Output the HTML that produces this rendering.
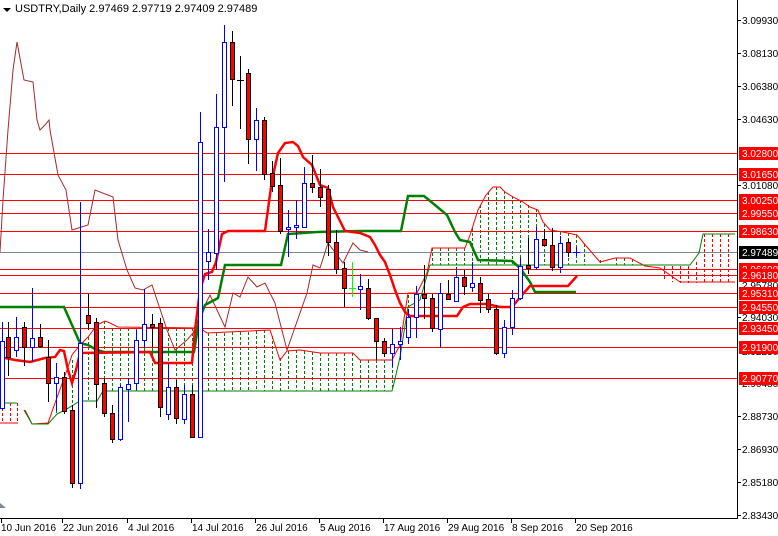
<!DOCTYPE html>
<html><head><meta charset="utf-8"><style>
html,body{margin:0;padding:0;background:#fff;}
svg{display:block;font-family:"Liberation Sans","DejaVu Sans",sans-serif;}
</style></head><body>
<svg width="778" height="536" viewBox="0 0 778 536" xmlns="http://www.w3.org/2000/svg">
<rect width="778" height="536" fill="#fff"/>
<!-- cloud verticals -->
<g stroke="#008000" stroke-width="1" stroke-dasharray="3,2" shape-rendering="crispEdges">
<line x1="56.5" y1="400" x2="56.5" y2="414"/><line x1="64.5" y1="385" x2="64.5" y2="410"/>
<line x1="72.5" y1="360" x2="72.5" y2="405"/><line x1="80.5" y1="345" x2="80.5" y2="401"/>
<line x1="88.5" y1="337" x2="88.5" y2="401"/><line x1="96.5" y1="326" x2="96.5" y2="398"/>
<line x1="104.5" y1="321" x2="104.5" y2="391"/>
<line x1="112.5" y1="328" x2="112.5" y2="391"/><line x1="120.5" y1="328" x2="120.5" y2="391"/>
<line x1="128.5" y1="328" x2="128.5" y2="391"/><line x1="136.5" y1="328" x2="136.5" y2="391"/>
<line x1="144.5" y1="328" x2="144.5" y2="391"/><line x1="152.5" y1="328" x2="152.5" y2="391"/>
<line x1="160.5" y1="328" x2="160.5" y2="391"/><line x1="168.5" y1="328" x2="168.5" y2="391"/>
<line x1="176.5" y1="328" x2="176.5" y2="391"/><line x1="184.5" y1="328" x2="184.5" y2="391"/>
<line x1="192.5" y1="328" x2="192.5" y2="391"/><line x1="200.5" y1="330" x2="200.5" y2="391"/>
<line x1="208.5" y1="333" x2="208.5" y2="391"/><line x1="216.5" y1="333" x2="216.5" y2="391"/>
<line x1="224.5" y1="333" x2="224.5" y2="391"/><line x1="232.5" y1="332" x2="232.5" y2="391"/>
<line x1="240.5" y1="332" x2="240.5" y2="391"/><line x1="248.5" y1="332" x2="248.5" y2="391"/>
<line x1="256.5" y1="331" x2="256.5" y2="391"/><line x1="264.5" y1="330" x2="264.5" y2="391"/>
<line x1="272.5" y1="336" x2="272.5" y2="391"/><line x1="280.5" y1="358" x2="280.5" y2="391"/>
<line x1="288.5" y1="351" x2="288.5" y2="391"/><line x1="296.5" y1="350" x2="296.5" y2="391"/>
<line x1="304.5" y1="351" x2="304.5" y2="391"/><line x1="312.5" y1="352" x2="312.5" y2="391"/>
<line x1="320.5" y1="353" x2="320.5" y2="391"/><line x1="328.5" y1="353" x2="328.5" y2="391"/>
<line x1="336.5" y1="353" x2="336.5" y2="391"/><line x1="344.5" y1="353" x2="344.5" y2="391"/>
<line x1="352.5" y1="353" x2="352.5" y2="391"/><line x1="360.5" y1="360" x2="360.5" y2="391"/>
<line x1="368.5" y1="360" x2="368.5" y2="391"/><line x1="376.5" y1="360" x2="376.5" y2="391"/>
<line x1="384.5" y1="360" x2="384.5" y2="391"/><line x1="392.5" y1="360" x2="392.5" y2="388"/>
<line x1="408.5" y1="295" x2="408.5" y2="307"/><line x1="416.5" y1="293" x2="416.5" y2="302"/>
<line x1="432.5" y1="248" x2="432.5" y2="265"/><line x1="440.5" y1="248" x2="440.5" y2="265"/>
<line x1="448.5" y1="248" x2="448.5" y2="265"/><line x1="456.5" y1="248" x2="456.5" y2="265"/>
<line x1="464.5" y1="248" x2="464.5" y2="265"/><line x1="472.5" y1="228" x2="472.5" y2="265"/>
<line x1="480.5" y1="205" x2="480.5" y2="265"/><line x1="488.5" y1="192" x2="488.5" y2="265"/>
<line x1="496.5" y1="187" x2="496.5" y2="265"/><line x1="504.5" y1="191" x2="504.5" y2="265"/>
<line x1="512.5" y1="196" x2="512.5" y2="265"/><line x1="520.5" y1="200" x2="520.5" y2="265"/>
<line x1="528.5" y1="205" x2="528.5" y2="265"/><line x1="536.5" y1="209" x2="536.5" y2="265"/>
<line x1="544.5" y1="224" x2="544.5" y2="265"/><line x1="552.5" y1="230" x2="552.5" y2="265"/>
<line x1="560.5" y1="232" x2="560.5" y2="265"/><line x1="568.5" y1="233" x2="568.5" y2="265"/>
<line x1="576.5" y1="235" x2="576.5" y2="265"/><line x1="584.5" y1="244" x2="584.5" y2="265"/>
<line x1="600.5" y1="260" x2="600.5" y2="265"/><line x1="616.5" y1="258" x2="616.5" y2="265"/>
<line x1="624.5" y1="258" x2="624.5" y2="265"/><line x1="632.5" y1="259" x2="632.5" y2="265"/>
</g>
<g stroke="#ff0000" stroke-width="1" stroke-dasharray="3,2" shape-rendering="crispEdges">
<line x1="2.5" y1="403" x2="2.5" y2="423"/><line x1="10.5" y1="403" x2="10.5" y2="423"/><line x1="17.5" y1="403" x2="17.5" y2="423"/>
<line x1="664.5" y1="266" x2="664.5" y2="280"/><line x1="672.5" y1="266" x2="672.5" y2="282"/>
<line x1="680.5" y1="266" x2="680.5" y2="283"/><line x1="688.5" y1="266" x2="688.5" y2="283"/>
<line x1="696.5" y1="262" x2="696.5" y2="283"/><line x1="704.5" y1="234" x2="704.5" y2="283"/>
<line x1="712.5" y1="234" x2="712.5" y2="283"/><line x1="720.5" y1="234" x2="720.5" y2="283"/>
<line x1="728.5" y1="234" x2="728.5" y2="283"/>
</g>
<!-- horizontal levels -->
<g stroke="#ff0000" stroke-width="1" shape-rendering="crispEdges">
<line x1="0" y1="153.5" x2="737" y2="153.5"/><line x1="0" y1="174.5" x2="737" y2="174.5"/>
<line x1="0" y1="200.5" x2="737" y2="200.5"/><line x1="0" y1="213.5" x2="737" y2="213.5"/>
<line x1="0" y1="231.5" x2="737" y2="231.5"/><line x1="0" y1="269.5" x2="737" y2="269.5"/>
<line x1="0" y1="275.5" x2="737" y2="275.5"/><line x1="0" y1="293.5" x2="737" y2="293.5"/>
<line x1="0" y1="307.5" x2="737" y2="307.5"/><line x1="0" y1="328.5" x2="737" y2="328.5"/>
<line x1="0" y1="347.5" x2="737" y2="347.5"/><line x1="0" y1="378.5" x2="737" y2="378.5"/>
</g>
<line x1="0" y1="252.5" x2="737" y2="252.5" stroke="#778899" stroke-width="1" shape-rendering="crispEdges"/>
<!-- span lines -->
<polyline fill="none" stroke="#ff0000" stroke-width="1" points="24,410 32,424 48,423 55,403 67,370 72,355 80,345 88,337 97,325 105,321 110,323 118,327 200,328 207,333 270,330 275,345 280,360 287,351 300,350 320,353 353,353 360,360 392,360 400,345 408,293 417,293 427,273 432,248 465,248 470,235 478,210 486,195 493,187 500,187 505,192 513,197 523,202 530,207 538,210 543,222 550,230 563,232 577,235 587,247 600,262 615,258 630,258 645,266 660,268 680,282 735,282"/>
<polyline fill="none" stroke="#ff0000" stroke-width="1" points="0,423 18,423"/>
<polyline fill="none" stroke="#008000" stroke-width="1" points="0,403 17,403"/>
<polyline fill="none" stroke="#008000" stroke-width="1" points="25,410 32,424 48,424 57,414 65,410 80,401 97,401 103,391 392,391 395,379 400,357 408,307 420,300 430,265 690,265 699,253 703,234 735,234"/>
<!-- chikou -->
<polyline fill="none" stroke="#a52a2a" stroke-width="1" points="0,252 3,200 8,130 13,70 17,42 24,80 33,82 37,120 40,130 45,125 49,120 50,130 58,175 66,190 72,230 88,225 95,190 113,197 118,240 127,270 135,288 143,290 152,285 157,300 167,330 175,350 187,340 193,333 200,315 210,295 217,310 225,327 233,293 240,297 248,277 257,287 265,283 275,303 287,350 307,293 313,265 320,268 328,243 343,263 353,243 360,250 368,252"/>
<!-- kijun -->
<polyline fill="none" stroke="#008000" stroke-width="2.5" points="0,307 64,307 72,325 80,343 88,345 97,350 104,352 194,352 199,320 205,305 218,298 225,265 281,265 288,234 317,232 360,231 401,231 408,196 424,196 435,205 447,215 455,232 460,240 470,242 478,260 512,261 520,268 530,282 535,292 576,292"/>
<!-- tenkan -->
<polyline fill="none" stroke="#ff0000" stroke-width="2.5" points="0,357 15,360 30,362 45,358 55,357 60,350 64,351 68,370 72,383 76,370 80,353 150,352 155,363 192,363 195,330 200,290 205,274 212,272 216,262 222,234 228,231 265,231 272,180 278,153 285,143 293,142 298,146 303,157 312,165 320,185 328,188 333,207 342,225 345,231 360,233 370,237 375,245 380,255 385,262 390,275 395,290 400,303 405,312 410,316 457,316 463,307 470,304 487,304 500,307 512,307 517,301 522,295 530,286 568,286 577,276"/>
<!-- candles -->
<g shape-rendering="crispEdges" stroke-width="1">
<g stroke="#0000ff" fill="#fff">
<line x1="2.5" y1="322" x2="2.5" y2="410"/><rect x="0.5" y="341.5" width="4" height="67"/>
<line x1="16.5" y1="317" x2="16.5" y2="357"/><rect x="14.5" y="337.5" width="4" height="13"/>
<line x1="32.5" y1="288" x2="32.5" y2="362"/><rect x="30.5" y="338.5" width="4" height="9"/>
<line x1="56.5" y1="363" x2="56.5" y2="411"/><rect x="54.5" y="377.5" width="4" height="6"/>
<line x1="80.5" y1="202" x2="80.5" y2="489"/><rect x="78.5" y="343.5" width="4" height="140"/>
<line x1="120.5" y1="385" x2="120.5" y2="441"/><rect x="118.5" y="387.5" width="4" height="52"/>
<line x1="128.5" y1="378" x2="128.5" y2="422"/><rect x="126.5" y="384.5" width="4" height="5"/>
<line x1="136.5" y1="330" x2="136.5" y2="390"/><rect x="134.5" y="340.5" width="4" height="43"/>
<line x1="144.5" y1="289" x2="144.5" y2="348"/><rect x="142.5" y="324.5" width="4" height="16"/>
<line x1="168.5" y1="363" x2="168.5" y2="420"/><rect x="166.5" y="387.5" width="4" height="27"/>
<line x1="184.5" y1="385" x2="184.5" y2="424"/><rect x="182.5" y="394.5" width="4" height="25"/>
<line x1="200.5" y1="112" x2="200.5" y2="437"/><rect x="198.5" y="142.5" width="4" height="295"/>
<line x1="208.5" y1="229" x2="208.5" y2="280"/><rect x="206.5" y="252.5" width="4" height="9"/>
<line x1="216.5" y1="94" x2="216.5" y2="270"/><rect x="214.5" y="127.5" width="4" height="126"/>
<line x1="224.5" y1="25" x2="224.5" y2="182"/><rect x="222.5" y="42.5" width="4" height="85"/>
<line x1="256.5" y1="108" x2="256.5" y2="171"/><rect x="254.5" y="120.5" width="4" height="19"/>
<line x1="288.5" y1="210" x2="288.5" y2="257"/><rect x="286.5" y="227.5" width="4" height="2"/>
<line x1="296.5" y1="200" x2="296.5" y2="239"/><rect x="294.5" y="225.5" width="4" height="2"/>
<line x1="304.5" y1="167" x2="304.5" y2="228"/><rect x="302.5" y="183.5" width="4" height="44"/>
<line x1="360.5" y1="274" x2="360.5" y2="310"/><rect x="358.5" y="286.5" width="4" height="3"/>
<line x1="392.5" y1="329" x2="392.5" y2="367"/><rect x="390.5" y="344.5" width="4" height="9"/>
<line x1="400.5" y1="327" x2="400.5" y2="360"/><rect x="398.5" y="341.5" width="4" height="3"/>
<line x1="408.5" y1="309" x2="408.5" y2="344"/><rect x="406.5" y="317.5" width="4" height="20"/>
<line x1="416.5" y1="286" x2="416.5" y2="338"/><rect x="414.5" y="294.5" width="4" height="23"/>
<line x1="440.5" y1="283" x2="440.5" y2="348"/><rect x="438.5" y="293.5" width="4" height="36"/>
<line x1="456.5" y1="267" x2="456.5" y2="301"/><rect x="454.5" y="277.5" width="4" height="24"/>
<line x1="472.5" y1="262" x2="472.5" y2="292"/><rect x="470.5" y="283.5" width="4" height="4"/>
<line x1="504.5" y1="320" x2="504.5" y2="358"/><rect x="502.5" y="327.5" width="4" height="26"/>
<line x1="512.5" y1="290" x2="512.5" y2="335"/><rect x="510.5" y="298.5" width="4" height="29"/>
<line x1="520.5" y1="258" x2="520.5" y2="300"/><rect x="518.5" y="266.5" width="4" height="32"/>
<line x1="536.5" y1="227" x2="536.5" y2="270"/><rect x="534.5" y="239.5" width="4" height="28"/>
<line x1="560.5" y1="236" x2="560.5" y2="273"/><rect x="558.5" y="243.5" width="4" height="24"/>
<line x1="576.5" y1="247" x2="576.5" y2="256"/><line x1="573" y1="252.5" x2="580" y2="252.5"/>
</g>
<g stroke="#000" fill="#ff0000">
<line x1="8.5" y1="322" x2="8.5" y2="376"/><rect x="6.5" y="337.5" width="4" height="20"/>
<line x1="24.5" y1="322" x2="24.5" y2="366"/><rect x="22.5" y="327.5" width="4" height="20"/>
<line x1="40.5" y1="324" x2="40.5" y2="348"/><rect x="38.5" y="337.5" width="4" height="9"/>
<line x1="48.5" y1="340" x2="48.5" y2="402"/><rect x="46.5" y="357.5" width="4" height="26"/>
<line x1="64.5" y1="372" x2="64.5" y2="414"/><rect x="62.5" y="377.5" width="4" height="34"/>
<line x1="72.5" y1="405" x2="72.5" y2="488"/><rect x="70.5" y="410.5" width="4" height="73"/>
<line x1="88.5" y1="294" x2="88.5" y2="330"/><rect x="86.5" y="315.5" width="4" height="8"/>
<line x1="96.5" y1="318" x2="96.5" y2="408"/><rect x="94.5" y="322.5" width="4" height="62"/>
<line x1="104.5" y1="378" x2="104.5" y2="417"/><rect x="102.5" y="383.5" width="4" height="30"/>
<line x1="112.5" y1="405" x2="112.5" y2="443"/><rect x="110.5" y="413.5" width="4" height="26"/>
<line x1="152.5" y1="314" x2="152.5" y2="347"/><rect x="150.5" y="324.5" width="4" height="3"/>
<line x1="160.5" y1="318" x2="160.5" y2="417"/><rect x="158.5" y="323.5" width="4" height="84"/>
<line x1="176.5" y1="380" x2="176.5" y2="424"/><rect x="174.5" y="387.5" width="4" height="31"/>
<line x1="192.5" y1="385" x2="192.5" y2="438"/><rect x="190.5" y="394.5" width="4" height="43"/>
<line x1="232.5" y1="31" x2="232.5" y2="106"/><rect x="230.5" y="42.5" width="4" height="37"/>
<line x1="240.5" y1="56" x2="240.5" y2="129"/><line x1="237" y1="80.5" x2="244" y2="80.5"/>
<line x1="248.5" y1="69" x2="248.5" y2="164"/><rect x="246.5" y="73.5" width="4" height="66"/>
<line x1="264.5" y1="117" x2="264.5" y2="180"/><rect x="262.5" y="120.5" width="4" height="54"/>
<line x1="272.5" y1="161" x2="272.5" y2="192"/><rect x="270.5" y="173.5" width="4" height="13"/>
<line x1="280.5" y1="158" x2="280.5" y2="234"/><rect x="278.5" y="185.5" width="4" height="46"/>
<line x1="312.5" y1="155" x2="312.5" y2="193"/><rect x="310.5" y="183.5" width="4" height="4"/>
<line x1="320.5" y1="169" x2="320.5" y2="207"/><rect x="318.5" y="187.5" width="4" height="10"/>
<line x1="328.5" y1="185" x2="328.5" y2="256"/><rect x="326.5" y="189.5" width="4" height="53"/>
<line x1="336.5" y1="230" x2="336.5" y2="274"/><rect x="334.5" y="242.5" width="4" height="27"/>
<line x1="344.5" y1="262" x2="344.5" y2="307"/><rect x="342.5" y="268.5" width="4" height="20"/>
<line x1="368.5" y1="279" x2="368.5" y2="320"/><rect x="366.5" y="288.5" width="4" height="30"/>
<line x1="376.5" y1="318" x2="376.5" y2="360"/><rect x="374.5" y="318.5" width="4" height="23"/>
<line x1="384.5" y1="338" x2="384.5" y2="357"/><rect x="382.5" y="341.5" width="4" height="12"/>
<line x1="424.5" y1="265" x2="424.5" y2="319"/><rect x="422.5" y="294.5" width="4" height="4"/>
<line x1="432.5" y1="294" x2="432.5" y2="332"/><rect x="430.5" y="298.5" width="4" height="30"/>
<line x1="448.5" y1="280" x2="448.5" y2="299"/><rect x="446.5" y="294.5" width="4" height="5"/>
<line x1="464.5" y1="270" x2="464.5" y2="295"/><rect x="462.5" y="277.5" width="4" height="9"/>
<line x1="480.5" y1="277" x2="480.5" y2="313"/><rect x="478.5" y="283.5" width="4" height="17"/>
<line x1="488.5" y1="294" x2="488.5" y2="313"/><rect x="486.5" y="299.5" width="4" height="10"/>
<line x1="496.5" y1="305" x2="496.5" y2="355"/><rect x="494.5" y="309.5" width="4" height="44"/>
<line x1="528.5" y1="238" x2="528.5" y2="274"/><rect x="526.5" y="265.5" width="4" height="3"/>
<line x1="544.5" y1="229" x2="544.5" y2="245"/><rect x="542.5" y="239.5" width="4" height="6"/>
<line x1="552.5" y1="228" x2="552.5" y2="271"/><rect x="550.5" y="245.5" width="4" height="22"/>
<line x1="568.5" y1="239" x2="568.5" y2="257"/><rect x="566.5" y="242.5" width="4" height="10"/>
</g>
<g stroke="#00ff00"><line x1="352.5" y1="262" x2="352.5" y2="297"/><line x1="349" y1="288.5" x2="356" y2="288.5"/></g>
</g>
<!-- title -->
<path d="M3,8 L11,8 L7,12 Z" fill="#000"/>
<text x="15" y="12" font-size="11" fill="#000">USDTRY,Daily  2.97469 2.97719 2.97409 2.97489</text>
<!-- axes -->
<g stroke="#000" stroke-width="1" shape-rendering="crispEdges">
<line x1="737.5" y1="0" x2="737.5" y2="519"/>
<line x1="0" y1="518.5" x2="738" y2="518.5"/>
</g>
<path d="M0,503 L6,508 L0,508 Z" fill="#778899"/>
<g stroke="#000" shape-rendering="crispEdges">
<line x1="737" y1="20.5" x2="741" y2="20.5"/><line x1="737" y1="53.5" x2="741" y2="53.5"/>
<line x1="737" y1="86.5" x2="741" y2="86.5"/><line x1="737" y1="119.5" x2="741" y2="119.5"/>
<line x1="737" y1="185.5" x2="741" y2="185.5"/><line x1="737" y1="317.5" x2="741" y2="317.5"/>
<line x1="737" y1="416.5" x2="741" y2="416.5"/><line x1="737" y1="449.5" x2="741" y2="449.5"/>
<line x1="737" y1="482.5" x2="741" y2="482.5"/><line x1="737" y1="515.5" x2="741" y2="515.5"/>
<line x1="1.5" y1="518" x2="1.5" y2="523"/><line x1="62.5" y1="518" x2="62.5" y2="523"/>
<line x1="127.5" y1="518" x2="127.5" y2="523"/><line x1="191.5" y1="518" x2="191.5" y2="523"/>
<line x1="255.5" y1="518" x2="255.5" y2="523"/><line x1="319.5" y1="518" x2="319.5" y2="523"/>
<line x1="383.5" y1="518" x2="383.5" y2="523"/><line x1="447.5" y1="518" x2="447.5" y2="523"/>
<line x1="511.5" y1="518" x2="511.5" y2="523"/><line x1="575.5" y1="518" x2="575.5" y2="523"/>
</g>
<g font-size="10" fill="#000">
<text x="742" y="24">3.09930</text><text x="742" y="57">3.08130</text>
<text x="742" y="90">3.06380</text><text x="742" y="123">3.04630</text>
<text x="742" y="189">3.01080</text><text x="742" y="218">2.99530</text>
<text x="742" y="289">2.95780</text><text x="742" y="321">2.94030</text>
<text x="742" y="355">2.92230</text><text x="742" y="387">2.90480</text>
<text x="742" y="420">2.88730</text><text x="742" y="453">2.86930</text>
<text x="742" y="486">2.85180</text><text x="742" y="519">2.83430</text>
</g>
<g font-size="10" fill="#fff">
<rect x="739" y="147" width="39" height="13" fill="#ff0000"/><text x="742" y="157">3.02800</text>
<rect x="739" y="168" width="39" height="13" fill="#ff0000"/><text x="742" y="178">3.01650</text>
<rect x="739" y="194" width="39" height="13" fill="#ff0000"/><text x="742" y="204">3.00250</text>
<rect x="739" y="207" width="39" height="13" fill="#ff0000"/><text x="742" y="217">2.99550</text>
<rect x="739" y="225" width="39" height="13" fill="#ff0000"/><text x="742" y="235">2.98630</text>
<rect x="739" y="246" width="39" height="13" fill="#000"/><text x="742" y="256">2.97489</text>
<rect x="739" y="263" width="39" height="13" fill="#ff0000"/><text x="742" y="273">2.96600</text>
<rect x="739" y="269" width="39" height="13" fill="#ff0000"/><text x="742" y="279">2.96180</text>
<rect x="739" y="287" width="39" height="13" fill="#ff0000"/><text x="742" y="297">2.95310</text>
<rect x="739" y="301" width="39" height="13" fill="#ff0000"/><text x="742" y="311">2.94550</text>
<rect x="739" y="322" width="39" height="13" fill="#ff0000"/><text x="742" y="332">2.93450</text>
<rect x="739" y="341" width="39" height="13" fill="#ff0000"/><text x="742" y="351">2.91900</text>
<rect x="739" y="372" width="39" height="13" fill="#ff0000"/><text x="742" y="382">2.90770</text>
</g>
<g font-size="10" fill="#000">
<text x="1" y="531">10 Jun 2016</text><text x="63" y="531">22 Jun 2016</text>
<text x="128" y="531">4 Jul 2016</text><text x="192" y="531">14 Jul 2016</text>
<text x="256" y="531">26 Jul 2016</text><text x="320" y="531">5 Aug 2016</text>
<text x="384" y="531">17 Aug 2016</text><text x="448" y="531">29 Aug 2016</text>
<text x="512" y="531">8 Sep 2016</text><text x="576" y="531">20 Sep 2016</text>
</g>
</svg>
</body></html>
